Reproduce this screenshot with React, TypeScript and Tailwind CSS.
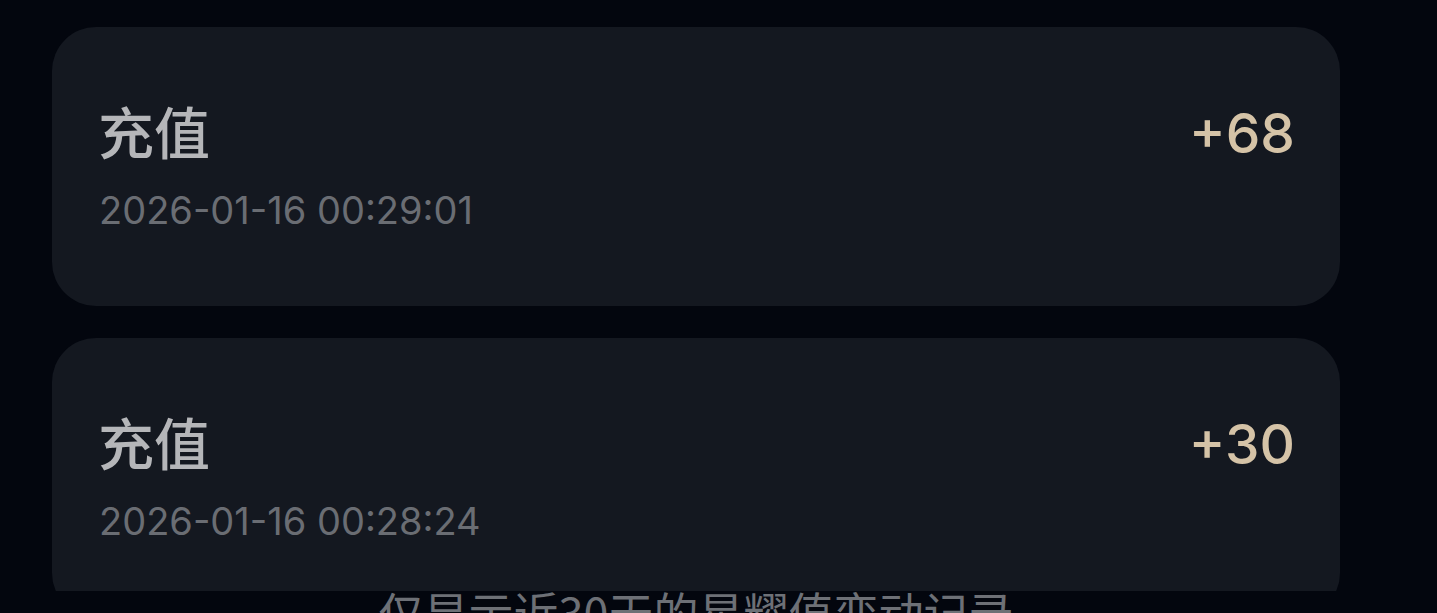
import React from "react";

const records = [
  { title: "充值", time: "2026-01-16 00:29:01", amount: "+68" },
  { title: "充值", time: "2026-01-16 00:28:24", amount: "+30" },
];

const cjk = { fontFamily: '"Noto Sans CJK SC", "Noto Sans", sans-serif' };
const latin = { fontFamily: 'Inter, "Noto Sans CJK SC", sans-serif' };

export default function App() {
  return (
    <div className="h-[613px] w-full overflow-hidden bg-[#03060e]">
      <div className="w-[1288px] ml-[52px]">
        <div className="h-[591px] overflow-hidden pt-[27px] flex flex-col gap-[32px]">
          {records.map((r, i) => (
            <div
              key={i}
              className="shrink-0 h-[279px] rounded-[44px] bg-[#141820] pl-[47px] pr-[45px] pt-[75px] flex justify-between items-start"
            >
              <div className="flex flex-col">
                <div
                  className="-ml-[1px] text-[56px] leading-[56px] font-medium text-[#b5b6b9]"
                  style={cjk}
                >
                  {r.title}
                </div>
                <div
                  className="mt-[33px] text-[38px] leading-[38px] text-[#6a6d73]"
                  style={latin}
                >
                  {r.time}
                </div>
              </div>
              <div
                className="mt-[4px] text-[55px] leading-[55px] font-medium text-[#d5c3a7]"
                style={latin}
              >
                {r.amount}
              </div>
            </div>
          ))}
        </div>
        <div
          className="text-center text-[45px] leading-[45px] text-[#6d7076] -mt-[2px]"
          style={cjk}
        >
          仅显示近30天的星耀值变动记录
        </div>
      </div>
    </div>
  );
}
